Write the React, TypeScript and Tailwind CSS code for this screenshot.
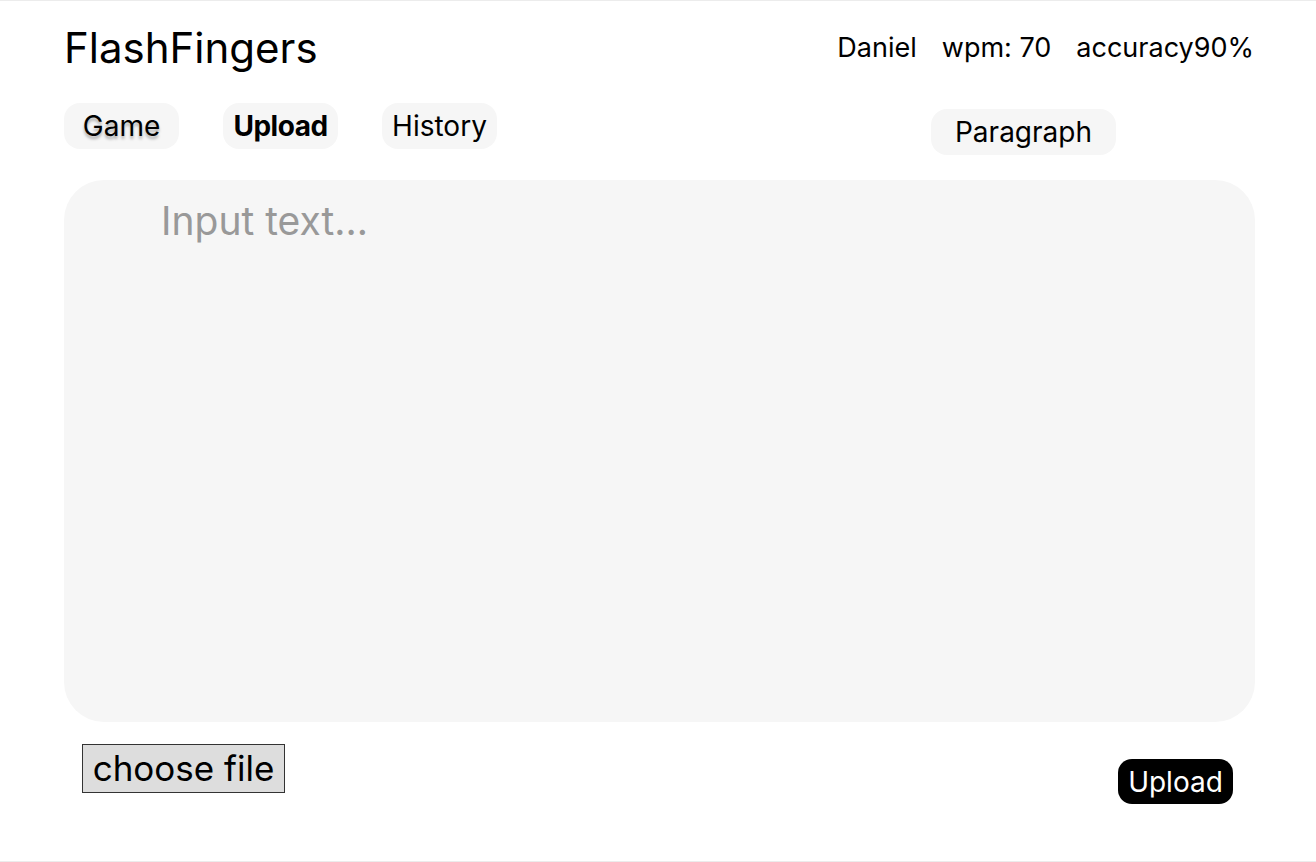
import React, { useState } from "react";

export default function App() {
  const [text, setText] = useState("");
  const tabs = ["Game", "Upload", "History"];

  return (
    <div
      className="w-full h-[862px] bg-white border-y border-[#ececec] text-black"
      style={{ fontFamily: "Inter, 'Noto Sans', sans-serif" }}
    >
      <div className="pl-[64px] pr-[61px] pt-[22px]">
        {/* Header */}
        <div className="flex items-start justify-between">
          <h1 className="text-[42px] leading-[50px] font-normal">FlashFingers</h1>
          <div className="flex gap-[25px] text-[27px] leading-[50px] pr-[1px]">
            <span>Daniel</span>
            <span>wpm: 70</span>
            <span>accuracy90%</span>
          </div>
        </div>

        {/* Tabs */}
        <div className="flex items-start mt-[30px] h-[46px]">
          <div className="flex gap-[44px]">
            {tabs.map((t) => (
              <button
                key={t}
                className={`h-[46px] w-[115px] rounded-[16px] bg-[#f6f6f6] text-[28px] leading-none ${
                  t === "Upload" ? "font-bold tracking-[-0.5px]" : ""
                } ${t === "Game" ? "[text-shadow:0_3px_3px_rgba(0,0,0,0.3)]" : ""}`}
              >
                {t}
              </button>
            ))}
          </div>
          <button className="ml-[434px] mt-[6px] h-[46px] w-[185px] rounded-[16px] bg-[#f6f6f6] text-[28px] leading-none">
            Paragraph
          </button>
        </div>

        {/* Text area */}
        <textarea
          value={text}
          onChange={(e) => setText(e.target.value)}
          placeholder="Input text..."
          className="block mt-[31px] w-full h-[542px] rounded-[40px] bg-[#f6f6f6] pl-[97px] pt-[16px] text-[39px] leading-[50px] resize-none outline-none placeholder:text-[#999999]"
        />

        {/* Footer */}
        <div className="flex items-start justify-between mt-[22px]">
          <button className="ml-[18px] h-[49px] w-[203px] bg-[#dddddd] border border-[#333] text-[35px] leading-none">
            choose file
          </button>
          <button className="mt-[15px] mr-[22px] h-[45px] w-[115px] rounded-[14px] bg-black text-white text-[28px] leading-none">
            Upload
          </button>
        </div>
      </div>
    </div>
  );
}
